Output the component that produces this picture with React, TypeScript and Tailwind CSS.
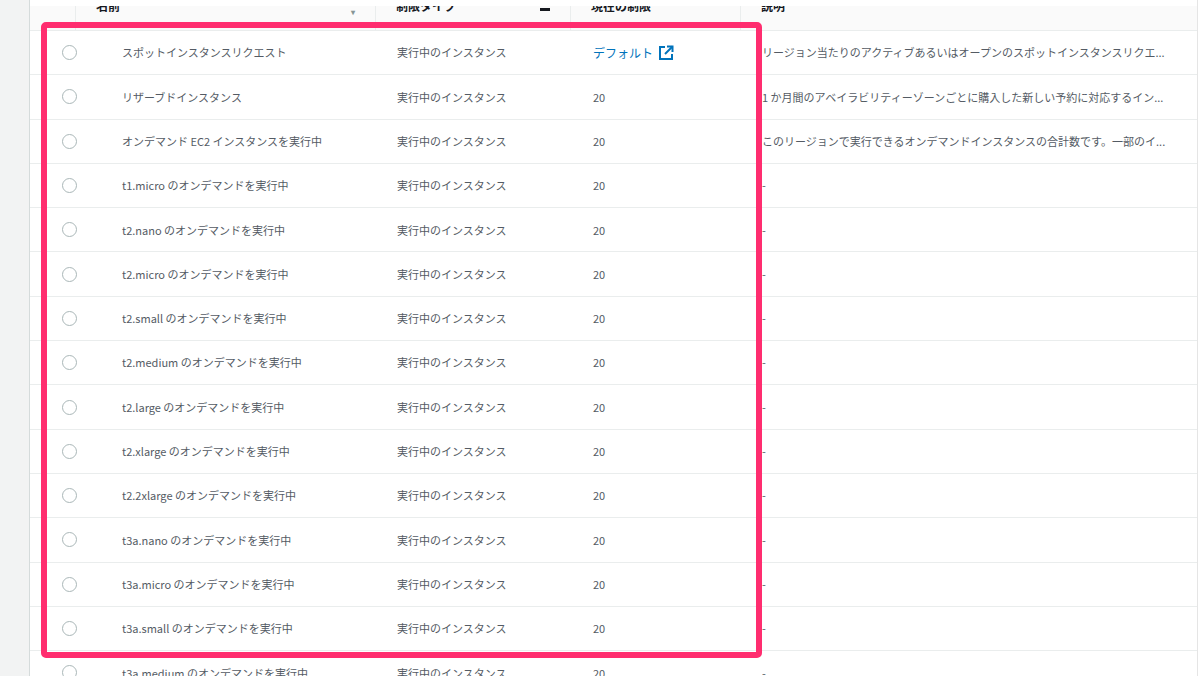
import React from "react";

const names = [
  "スポットインスタンスリクエスト",
  "リザーブドインスタンス",
  "オンデマンド EC2 インスタンスを実行中",
  "t1.micro のオンデマンドを実行中",
  "t2.nano のオンデマンドを実行中",
  "t2.micro のオンデマンドを実行中",
  "t2.small のオンデマンドを実行中",
  "t2.medium のオンデマンドを実行中",
  "t2.large のオンデマンドを実行中",
  "t2.xlarge のオンデマンドを実行中",
  "t2.2xlarge のオンデマンドを実行中",
  "t3a.nano のオンデマンドを実行中",
  "t3a.micro のオンデマンドを実行中",
  "t3a.small のオンデマンドを実行中",
  "t3a.medium のオンデマンドを実行中",
];
const descs = [
  "リージョン当たりのアクティブあるいはオープンのスポットインスタンスリクエ...",
  "1 か月間のアベイラビリティーゾーンごとに購入した新しい予約に対応するイン...",
  "このリージョンで実行できるオンデマンドインスタンスの合計数です。一部のイ...",
];

export default function App() {
  return (
    <div className="relative w-[1200px] h-[676px] overflow-hidden bg-white text-[11px] text-[#545b64]" style={{ fontFamily: '"Noto Sans CJK JP", "Noto Sans", sans-serif' }}>
      <div className="flex h-full">
        <div className="w-[30px] shrink-0 bg-[#f2f3f3] border-r border-[#d5dbdb]" />
        <div className="flex-1 flex flex-col pt-[6px] border-r border-[#e5e5e5] mr-[2px]">
          <div className="flex h-[25px] shrink-0 bg-[#fafafa] border-b border-[#eaeded] overflow-hidden font-bold text-[#16191f] text-[12px]">
            <div className="w-[45px]" />
            <div className="w-[300px] border-l border-[#eaeded] pl-[20px] relative"><span className="relative top-[-9px]">名前</span><span className="absolute right-[20px] top-[0px] text-[8px] text-[#879596]">▾</span></div>
            <div className="w-[195px] border-l border-[#eaeded] pl-[20px] relative"><span className="relative top-[-9px]">制限タイプ</span><span className="absolute right-[20px] top-[2px] w-[10px] h-[3px] bg-[#16191f]" /></div>
            <div className="w-[170px] border-l border-[#eaeded] pl-[20px]"><span className="relative top-[-9px]">現在の制限</span></div>
            <div className="flex-1 border-l border-[#eaeded] pl-[20px]"><span className="relative top-[-9px]">説明</span></div>
          </div>
          {names.map((n, i) => (
            <div key={i} className="flex items-center h-[44.3px] shrink-0 border-b border-[#eaeded]">
              <div className="w-[70px] shrink-0 pl-[32px] flex"><span className="w-[15px] h-[15px] rounded-full border border-[#aab7b8] bg-white" /></div>
              <div className="w-[297px] shrink-0 pl-[22px]">{n}</div>
              <div className="w-[196px] shrink-0">実行中のインスタンス</div>
              <div className="w-[169px] shrink-0">
                {i === 0 ? (
                  <span className="text-[#0073bb] inline-flex items-center gap-[5px] text-[12px]">デフォルト
                    <svg width="16" height="16" viewBox="0 0 16 16" fill="none" stroke="#0073bb" strokeWidth="2"><path d="M7 2H2v12h12V9" /><path d="M9 1.5h5.5V7" /><path d="M14.5 1.5L7 9" /></svg>
                  </span>
                ) : "20"}
              </div>
              <div className="flex-1 whitespace-nowrap overflow-hidden">{descs[i] ?? "-"}</div>
            </div>
          ))}
        </div>
      </div>
      <div className="absolute left-[41px] top-[22px] w-[721px] h-[636px] border-[6px] border-[#ff2d6f] rounded-[5px]" />
    </div>
  );
}
